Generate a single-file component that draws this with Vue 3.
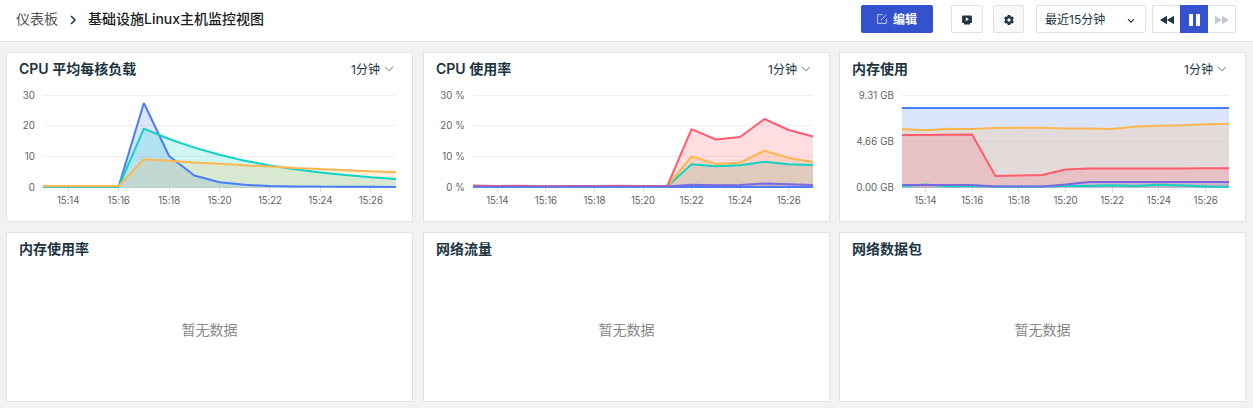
<script setup>
const BLUE = '#4a7dfc'
const TEAL = '#0dd3c5'
const ORANGE = '#ffb64d'
const RED = '#ff5c6c'
const PURPLE = '#7a68e0'

const times = ['15:14', '15:16', '15:18', '15:20', '15:22', '15:24', '15:26']
const BASE = 135.5

// Series are heights on the drawing surface, one entry per minute.
const cards = [
  {
    title: 'CPU 平均每核负载', left: 37, right: 390, labelX: 29,
    grid: [['30', 43.5], ['20', 73.5], ['10', 104.5], ['0', BASE]],
    series: [
      { color: BLUE, y: [134.6, 134.6, 134.6, 134.6, 51, 104, 123.5, 130.3, 132.8, 134.1, 134.4, 134.6, 134.7, 134.8, 135] },
      { color: TEAL, y: [134.8, 134.8, 134.8, 134.8, 76.6, 87, 95.6, 102.8, 108.7, 113.5, 117.3, 120.6, 123.1, 125.3, 127] },
      { color: ORANGE, y: [134.1, 134.1, 134.1, 134.1, 107.2, 108.8, 110.4, 111.8, 113.3, 114.6, 115.9, 117.1, 118.2, 119.3, 120.3] }
    ]
  },
  {
    title: 'CPU 使用率', left: 50, right: 390, labelX: 42,
    grid: [['30 %', 43.5], ['20 %', 73.5], ['10 %', 104.5], ['0 %', BASE]],
    series: [
      { color: BLUE, y: Array(15).fill(135) },
      { color: TEAL, y: [134.6, 134.6, 134.6, 134.6, 134.6, 134.6, 134.6, 134.6, 134.6, 112.3, 114.2, 113.3, 109.8, 112.2, 113] },
      { color: ORANGE, y: [134, 134, 134, 134, 134, 134, 134, 134, 134, 104.5, 112, 110.6, 98.7, 105.9, 110] },
      { color: RED, y: [133.6, 134, 133.7, 134.3, 134, 134, 133.7, 134, 134, 77.2, 87.5, 85, 67, 78, 84.5] },
      { color: PURPLE, y: [134.6, 134.6, 134.6, 134.6, 134.6, 134.6, 134.6, 134.6, 134.6, 132.7, 133.2, 133, 131.5, 132.2, 133] }
    ]
  },
  {
    title: '内存使用', left: 63, right: 390, labelX: 55,
    grid: [['9.31 GB', 43.5], ['4.66 GB', 89.5], ['0.00 GB', BASE]],
    series: [
      { color: BLUE, y: Array(15).fill(56) },
      { color: TEAL, y: [134.3, 132.5, 134.6, 134.1, 134.6, 134.6, 134.6, 134, 134, 133.2, 134, 132.8, 133.6, 134.6, 134.7] },
      { color: ORANGE, y: [77, 78.3, 76.7, 77, 76.1, 75.7, 75.8, 76.5, 76.5, 77, 74.4, 73.8, 73.2, 72.3, 71.8] },
      { color: RED, y: [83, 83, 82.7, 82.6, 124, 123.4, 122.9, 117.6, 116.4, 116.4, 116.4, 116.4, 116.4, 116.2, 116.2] },
      { color: PURPLE, y: [133, 133, 133, 133, 134.5, 134.5, 134.5, 132.6, 130, 130, 130, 130, 130, 130, 130] }
    ]
  },
  { title: '内存使用率' },
  { title: '网络流量' },
  { title: '网络数据包' }
]

const xAt = (c, i) => +(c.left + ((c.right - c.left) * i) / 14).toFixed(2)
const tickX = (c, k) => Math.round(xAt(c, k * 2 + 1) - 0.5) + 0.5
const line = (c, s) => s.y.map((y, i) => `${xAt(c, i)},${y}`).join(' ')
const area = (c, s) => `${c.left},${BASE} ${line(c, s)} ${c.right},${BASE}`
</script>

<template>
  <div class="page">
    <header class="topbar">
      <nav class="crumbs">
        <span class="parent">仪表板</span>
        <svg class="sep" width="8" height="10" viewBox="0 0 8 10"><path d="M2 1l4 4-4 4" /></svg>
        <span class="current">基础设施Linux主机监控视图</span>
      </nav>
      <div class="actions">
        <button class="edit">
          <svg width="10" height="10" viewBox="0 0 10 10"><path d="M5.6.6H.6v8.8h8.8V4.8M3.7 6.3L9.2.7" /></svg>
          <span>编辑</span>
        </button>
        <button class="square present">
          <svg width="10" height="10" viewBox="0 0 10 10">
            <path fill-rule="evenodd" d="M1 .5h8a.9.9 0 0 1 .9.9v5.8a.9.9 0 0 1-.9.9H8v1.4H2V8.1H1a.9.9 0 0 1-.9-.9V1.4A.9.9 0 0 1 1 .5zM3.8 2.3v4L7 4.3z" />
          </svg>
        </button>
        <button class="square settings">
          <svg width="10" height="10" viewBox="0 0 10 10">
            <path fill-rule="evenodd" d="M3.8 0h2.4l.3 1.3.9.5 1.3-.4 1.2 2-1 .9v1.4l1 .9-1.2 2-1.3-.4-.9.5L6.200 10H3.800l-.3-1.3-.9-.5-1.300.4-1.200-2 1-.9V4.300l-1-.9 1.200-2 1.300.4.9-.5zM5 3.300a1.700 1.700 0 1 0 0 3.400 1.700 1.700 0 0 0 0-3.400z" />
          </svg>
        </button>
        <button class="range">
          <span>最近15分钟</span>
          <svg width="8" height="6" viewBox="0 0 8 6"><path d="M1 1.2l3 3 3-3" /></svg>
        </button>
        <div class="player">
          <button class="step">
            <svg width="14" height="10" viewBox="0 0 14 10"><path d="M7 .7v8.6L0 5zM14 .7v8.6L7 5z" /></svg>
          </button>
          <button class="pause"><i></i><i></i></button>
          <button class="step off">
            <svg width="14" height="10" viewBox="0 0 14 10"><path d="M0 .7v8.6L7 5zM7 .7v8.6L14 5z" /></svg>
          </button>
        </div>
      </div>
    </header>

    <main class="board">
      <section v-for="c in cards" :key="c.title" class="card">
        <div class="head">
          <h2>{{ c.title }}</h2>
          <div v-if="c.series" class="interval">
            <span>1分钟</span>
            <svg width="10" height="6" viewBox="0 0 10 6"><path d="M1 .8l4 4 4-4" /></svg>
          </div>
        </div>
        <svg v-if="c.series" class="chart" width="405" height="137" viewBox="1 32 405 137">
          <line v-for="g in c.grid" :key="g[0]" class="grid" :class="{ axis: g[1] === BASE }" :x1="c.left" :x2="c.right" :y1="g[1]" :y2="g[1]" />
          <line v-for="(t, k) in times" :key="t" class="axis" :x1="tickX(c, k)" :x2="tickX(c, k)" y1="136" y2="140" />
          <polygon v-for="s in c.series" :key="'a' + s.color" :points="area(c, s)" :fill="s.color" fill-opacity=".2" />
          <polyline v-for="s in c.series" :key="'l' + s.color" :points="line(c, s)" :stroke="s.color" />
          <text v-for="g in c.grid" :key="'t' + g[0]" class="value" :x="c.labelX" :y="g[1] + 3.5" text-anchor="end">{{ g[0] }}</text>
          <text v-for="(t, k) in times" :key="'x' + t" class="time" :x="xAt(c, k * 2 + 1)" y="152" text-anchor="middle">{{ t }}</text>
        </svg>
        <div v-else class="empty">暂无数据</div>
      </section>
    </main>
  </div>
</template>

<style>
body {
  background: #f1f2f4;
}
</style>

<style scoped>
.page {
  height: 408px;
  overflow: hidden;
  background: #f1f2f4;
  color: #20343f;
  font-family: Inter, "Noto Sans CJK SC", sans-serif;
}
.topbar {
  box-sizing: border-box;
  height: 42px;
  padding: 5px 17px 0 16px;
  display: flex;
  justify-content: space-between;
  align-items: flex-start;
  background: #fff;
  border-bottom: 1px solid #dfe2e7;
}
.crumbs {
  display: flex;
  align-items: center;
  height: 28px;
  font-size: 14px;
  line-height: 28px;
}
.parent { color: #555; }
.sep { margin: 1px 11px 0; }
.sep path { fill: none; stroke: #20343f; stroke-width: 1.5; }
.current { color: #1c1c1c; font-weight: 500; }
.actions { display: flex; height: 28px; }
button {
  box-sizing: border-box;
  display: flex;
  align-items: center;
  justify-content: center;
  height: 28px;
  margin: 0;
  padding: 0;
  border: 1px solid #dfe2e8;
  border-radius: 2px;
  background: #fff;
  color: #20343f;
  font-family: inherit;
  font-size: 12px;
}
button svg { display: block; fill: #20343f; }
.edit span, .range span { padding-bottom: 2px; }
.edit {
  width: 72px;
  gap: 6px;
  border: 0;
  background: #3451ce;
  color: #fff;
  font-weight: 700;
}
.edit svg { fill: none; stroke: #c3ccf3; stroke-width: 1; }
.square { width: 32px; }
.present { margin-left: 18px; padding-top: 2px; }
.settings { margin-left: 10px; width: 31px; padding-top: 2px; background: #f8f9fb; }
.range {
  width: 110px;
  margin-left: 12px;
  padding: 0 10px 0 8px;
  justify-content: space-between;
}
.range svg { margin-top: 3px; fill: none; stroke: #20343f; stroke-width: 1.2; }
.player { display: flex; margin-left: 6px; }
.step { width: 28px; padding-top: 2px; border-right: 0; border-radius: 2px 0 0 2px; }
.step.off { border-right: 1px solid #dfe2e8; border-left: 0; border-radius: 0 2px 2px 0; }
.off svg { fill: #c5c9d3; }
.pause { width: 28px; gap: 3px; padding-top: 2px; border: 0; border-radius: 0; background: #3451ce; }
.pause i { width: 4px; height: 12px; background: #fff; }
.board {
  display: grid;
  grid-template-columns: 417px 416px 407px;
  grid-auto-rows: 170px;
  row-gap: 10px;
  padding: 10px 0 0 6px;
}
.card {
  box-sizing: border-box;
  width: 407px;
  display: flex;
  flex-direction: column;
  background: #fff;
  border: 1px solid #dfe2e7;
}
.head {
  flex: none;
  display: flex;
  justify-content: space-between;
  align-items: center;
  height: 31px;
  padding: 0 18px 0 12px;
}
h2 {
  margin: 0;
  font-size: 14px;
  font-weight: 600;
  line-height: 20px;
}
.interval {
  display: flex;
  align-items: center;
  gap: 4px;
  font-size: 12px;
}
.interval svg { fill: none; stroke: #999; stroke-width: 1.1; }
.chart { display: block; }
.chart text { font-size: 9.7px; fill: #606266; }
.chart .value { letter-spacing: .12px; }
.chart .time { letter-spacing: -.1px; }
.chart polyline { fill: none; stroke-width: 2; stroke-linejoin: bevel; }
.grid { stroke: #f0f0f0; }
.axis { stroke: #dcdcdc; }
.empty {
  flex: 1;
  display: flex;
  align-items: center;
  justify-content: center;
  padding-bottom: 7px;
  color: #888;
  font-size: 14px;
}
</style>
